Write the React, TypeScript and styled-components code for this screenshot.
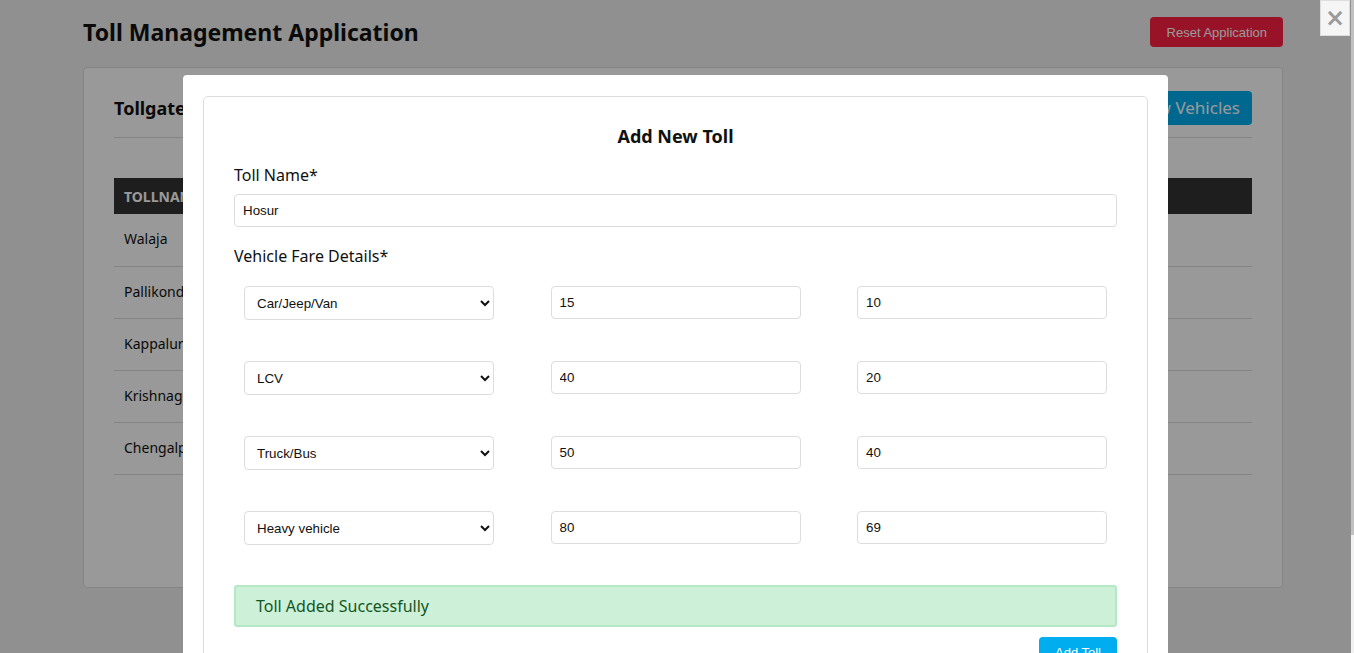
import styled, {createGlobalStyle} from "styled-components";

const GlobalStyle = createGlobalStyle`
  html, body {
    margin: 0;
    padding: 0;
  }
  body {
    background: #f0f0f0;
    font-family: "Noto Sans", sans-serif;
    color: #111;
    overflow: hidden;
  }
  * {
    box-sizing: border-box;
  }
`;

const Page = styled.div`
  padding: 17px 71px 0 83px;
`;
const Header = styled.header`
  display: flex;
  justify-content: space-between;
  align-items: center;
  height: 30px;
`;
const AppTitle = styled.h1`
  margin: 0;
  font-size: 23px;
  font-weight: 700;
`;
const ResetBtn = styled.button`
  height: 30px;
  padding: 0 16px 0 17px;
  background: #fd2143;
  color: #fff;
  border: none;
  border-radius: 4px;
  font-family: "Liberation Sans", Arial, sans-serif;
  font-size: 13px;
`;
const Card = styled.section`
  margin-top: 20px;
  background: #fff;
  border: 1px solid #ddd;
  border-radius: 4px;
  padding: 23px 30px 112px;
`;
const CardHead = styled.div`
  display: flex;
  justify-content: space-between;
  align-items: center;
  padding-bottom: 12px;
  border-bottom: 1px solid #ddd;
`;
const CardTitle = styled.h2`
  margin: 0;
  font-size: 18px;
  font-weight: 700;
`;
const ViewBtn = styled.button`
  height: 34px;
  padding: 0 12px 2px;
  background: #00adef;
  color: #fff;
  border: none;
  border-radius: 4px;
  font-family: "Noto Sans", sans-serif;
  font-size: 17px;
`;
const Table = styled.table`
  width: 100%;
  margin-top: 40px;
  border-collapse: collapse;
  font-size: 14px;
`;
const Th = styled.th`
  height: 36px;
  padding: 0 10px;
  background: #333;
  color: #fff;
  text-align: left;
  text-transform: uppercase;
  font-weight: 700;
`;
const Td = styled.td`
  height: 52px;
  padding: 0 10px 2px;
  border-bottom: 1px solid #ddd;
`;

const Overlay = styled.div`
  position: fixed;
  inset: 0;
  padding-right: 3px;
  background: rgba(0, 0, 0, 0.4);
  overflow: hidden;
`;
const ScrollTrack = styled.div`
  position: absolute;
  top: 0;
  right: 0;
  bottom: 0;
  width: 3px;
  background: #f1f1f1;
`;
const ScrollThumb = styled.div`
  height: 82%;
  background: #c1c1c1;
`;
const CloseBtn = styled.button`
  position: absolute;
  top: 0;
  right: 4px;
  width: 30px;
  height: 36px;
  padding: 0;
  background: #f5f5f5;
  border: 1px solid #ddd;
  color: #9a9a9a;
  font-family: "DejaVu Sans", sans-serif;
  font-size: 24px;
  font-weight: 700;
  line-height: 1;
`;
const Modal = styled.div`
  width: 985px;
  margin: 75px auto 120px;
  background: #fff;
  border-radius: 4px;
  padding: 21px 20px 20px;
`;
const FormCard = styled.div`
  border: 1px solid #ddd;
  border-radius: 5px;
  padding: 27px 30px 24px;
`;
const FormTitle = styled.h3`
  margin: 0 0 16px;
  text-align: center;
  font-size: 18px;
  font-weight: 700;
`;
const Label = styled.div<{$top?: number; $gap?: number}>`
  font-size: 16px;
  margin-top: ${(p) => p.$top ?? 0}px;
  margin-bottom: ${(p) => p.$gap ?? 8}px;
`;
const fieldStyle = `
  height: 33px;
  border: 1px solid #ddd;
  border-radius: 4px;
  background: #fff;
  color: #111;
  font-family: "Liberation Sans", Arial, sans-serif;
  font-size: 13.33px;
`;
const TextInput = styled.input<{$wide?: boolean}>`
  ${fieldStyle}
  width: ${(p) => (p.$wide ? "100%" : "250px")};
  padding: 0 8px;
`;
const Select = styled.select`
  ${fieldStyle}
  width: 250px;
  height: 34px;
  padding: 0 8px;
`;
const FareGrid = styled.div`
  display: grid;
  grid-template-columns: repeat(3, 250px);
  justify-content: space-between;
  row-gap: 41px;
  padding: 0 10px;
`;
const Alert = styled.div`
  margin-top: 40px;
  height: 42px;
  display: flex;
  align-items: center;
  padding-left: 20px;
  background: #cdf0d8;
  border: 2px solid #b5e9c6;
  border-radius: 3px;
  color: #14561f;
  font-size: 16px;
`;
const Actions = styled.div`
  display: flex;
  justify-content: flex-end;
  margin-top: 10px;
`;
const AddBtn = styled.button`
  height: 30px;
  padding: 0 16px;
  background: #00adef;
  color: #fff;
  border: none;
  border-radius: 4px;
  font-family: "Liberation Sans", Arial, sans-serif;
  font-size: 13px;
`;

const tolls = ["Walaja", "Pallikondai", "Kappalur", "Krishnagiri", "Chengalpattu"];
const vehicleTypes = ["Car/Jeep/Van", "LCV", "Truck/Bus", "Heavy vehicle"];
const fares = [
  {type: "Car/Jeep/Van", single: "15", ret: "10"},
  {type: "LCV", single: "40", ret: "20"},
  {type: "Truck/Bus", single: "50", ret: "40"},
  {type: "Heavy vehicle", single: "80", ret: "69"},
];

const App = () => {
  return (
    <>
      <GlobalStyle />
      <Page>
        <Header>
          <AppTitle>Toll Management Application</AppTitle>
          <ResetBtn>Reset Application</ResetBtn>
        </Header>
        <Card>
          <CardHead>
            <CardTitle>Tollgate List</CardTitle>
            <ViewBtn>View Vehicles</ViewBtn>
          </CardHead>
          <Table>
            <thead>
              <tr>
                <Th>Tollname</Th>
                <Th>Vehicle fare details</Th>
              </tr>
            </thead>
            <tbody>
              {tolls.map((t) => (
                <tr key={t}>
                  <Td>{t}</Td>
                  <Td />
                </tr>
              ))}
            </tbody>
          </Table>
        </Card>
      </Page>
      <Overlay>
        <ScrollTrack>
          <ScrollThumb />
        </ScrollTrack>
        <CloseBtn>×</CloseBtn>
        <Modal>
          <FormCard>
            <FormTitle>Add New Toll</FormTitle>
            <Label>Toll Name*</Label>
            <TextInput $wide defaultValue="Hosur" />
            <Label $top={18} $gap={19}>
              Vehicle Fare Details*
            </Label>
            <FareGrid>
              {fares.flatMap((f) => [
                <Select key={f.type + "-type"} defaultValue={f.type}>
                  {vehicleTypes.map((v) => (
                    <option key={v}>{v}</option>
                  ))}
                </Select>,
                <TextInput key={f.type + "-single"} defaultValue={f.single} />,
                <TextInput key={f.type + "-return"} defaultValue={f.ret} />,
              ])}
            </FareGrid>
            <Alert>Toll Added Successfully</Alert>
            <Actions>
              <AddBtn>Add Toll</AddBtn>
            </Actions>
          </FormCard>
        </Modal>
      </Overlay>
    </>
  );
};

export default App;
